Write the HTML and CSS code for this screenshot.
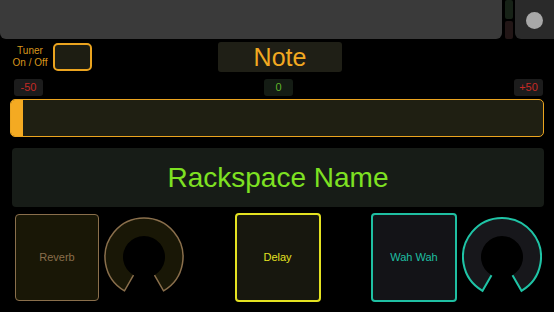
FILE: index.html
```html
<!DOCTYPE html>
<html lang="en">
  <head>
    <meta charset="UTF-8" />
    <title>Rackspace Panel</title>
    <link rel="stylesheet" href="styles.css">
  </head>
  <body>
    <div id="panel">
      <!-- Top bar -->
      <div class="top-row">
        <div class="display-bar"></div>
        <div class="leds">
          <div class="led led-green"></div>
          <div class="led led-red"></div>
        </div>
        <div class="record-button"><span class="dot"></span></div>
      </div>

      <!-- Tuner -->
      <div class="tuner-row">
        <div class="tuner-label">Tuner<br />On / Off</div>
        <div class="tuner-toggle"></div>
        <div class="note-box">Note</div>
      </div>

      <div class="scale-row">
        <span class="scale-tag red">-50</span>
        <span class="scale-tag green">0</span>
        <span class="scale-tag red">+50</span>
      </div>

      <div class="tuner-slider">
        <div class="slider-handle"></div>
      </div>

      <!-- Rackspace -->
      <div class="rackspace">Rackspace Name</div>

      <!-- Effects -->
      <div class="fx-row">
        <div class="fx-group">
          <div class="fx-button reverb">Reverb</div>
          <svg class="knob reverb-knob" width="80" height="80" viewBox="0 0 80 80">
            <path class="knob-fill" d="M20.5 73.78 A39 39 0 1 1 59.5 73.78 L50.5 58.19 A21 21 0 1 0 29.5 58.19 Z" />
            <path class="knob-line" d="M29.5 58.19 L20.5 73.78 A39 39 0 1 1 59.5 73.78 L50.5 58.19" />
          </svg>
        </div>
        <div class="fx-button delay">Delay</div>
        <div class="fx-group">
          <div class="fx-button wah">Wah Wah</div>
          <svg class="knob wah-knob" width="80" height="80" viewBox="0 0 80 80">
            <path class="knob-fill" d="M20.5 73.78 A39 39 0 1 1 59.5 73.78 L50.5 58.19 A21 21 0 1 0 29.5 58.19 Z" />
            <path class="knob-line" d="M29.5 58.19 L20.5 73.78 A39 39 0 1 1 59.5 73.78 L50.5 58.19" />
          </svg>
        </div>
      </div>
    </div>
  </body>
</html>
```

FILE: styles.css
```css
/* General Styling */
body {
  margin: 0;
  padding: 0;
  background: #000;
  font-family: "Liberation Sans", Arial, sans-serif;
}

#panel {
  width: 554px;
  height: 312px;
  overflow: hidden;
}

/* Top bar */
.top-row {
  display: flex;
  height: 39px;
}

.display-bar {
  width: 502px;
  background: #3a3a3a;
  border-radius: 0 0 6px 6px;
}

.leds {
  display: flex;
  flex-direction: column;
  gap: 2px;
  width: 8px;
  margin: 0 2px 0 3px;
}

.led {
  flex: 1;
  border-radius: 2px;
}

.led-green {
  background: #172217;
}

.led-red {
  background: #221616;
}

.record-button {
  flex: 1;
  display: flex;
  align-items: center;
  justify-content: center;
  background: #2a2a2a;
  border-radius: 0 0 0 6px;
}

.dot {
  width: 17px;
  height: 17px;
  border-radius: 50%;
  background: #a8a8a8;
  margin-top: 2px;
}

/* Tuner */
.tuner-row {
  display: flex;
  align-items: center;
  margin-top: 3px;
  height: 30px;
}

.tuner-label {
  width: 44px;
  margin-left: 8px;
  text-align: center;
  font-size: 10px;
  line-height: 12px;
  color: #d8961c;
}

.tuner-toggle {
  width: 35px;
  height: 24px;
  margin-left: 1px;
  border: 2px solid #eba41f;
  border-radius: 5px;
  background: #1d1d12;
}

.note-box {
  width: 124px;
  height: 30px;
  margin-left: 126px;
  background: #1f1f16;
  border-radius: 3px;
  color: #f2a921;
  font-size: 25px;
  line-height: 30px;
  text-align: center;
}

.scale-row {
  display: flex;
  justify-content: space-between;
  margin: 7px 11px 0 14px;
}

.scale-tag {
  width: 29px;
  height: 17px;
  line-height: 17px;
  border-radius: 3px;
  background: #1c1c1c;
  font-size: 11px;
  text-align: center;
}

.scale-tag.red {
  color: #c42a25;
}

.scale-tag.green {
  color: #5fb52a;
  background: #141c14;
}

.tuner-slider {
  display: flex;
  height: 36px;
  margin: 3px 10px 0 10px;
  border: 1.5px solid #eba41f;
  border-radius: 5px;
  background: #1f1f12;
}

.slider-handle {
  width: 12px;
  background: #f4aa22;
  border-radius: 4px 0 0 4px;
}

/* Rackspace */
.rackspace {
  height: 59px;
  margin: 11px 10px 0 12px;
  background: #171c17;
  border-radius: 4px;
  color: #7ee122;
  font-size: 28px;
  line-height: 59px;
  text-align: center;
}

/* Effects */
.fx-row {
  display: flex;
  justify-content: space-between;
  align-items: center;
  height: 88px;
  margin: 6px 12px 0 15px;
}

.fx-group {
  display: flex;
  align-items: center;
  gap: 5px;
}

.fx-button {
  display: flex;
  align-items: center;
  justify-content: center;
  width: 82px;
  height: 85px;
  border-radius: 4px;
  font-size: 11px;
}

.reverb {
  border: 1.5px solid #8a6f4c;
  background: #191706;
  color: #8a6f4c;
}

.delay {
  border: 2px solid #e4e221;
  background: #17170e;
  color: #e4e221;
}

.wah {
  border: 2px solid #1fbfa2;
  background: #131317;
  color: #1fbfa2;
}

.knob-line {
  fill: none;
  stroke-width: 1.5;
}

.reverb-knob .knob-fill {
  fill: #191706;
}

.reverb-knob .knob-line {
  stroke: #8a6f4c;
}

.wah-knob .knob-fill {
  fill: #17171b;
}

.wah-knob .knob-line {
  stroke: #1fc4a6;
  stroke-width: 2;
}
```
